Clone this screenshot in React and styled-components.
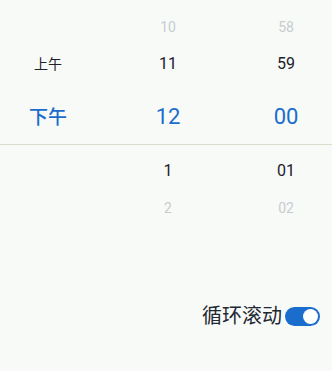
import React, { useState } from 'react';
import styled, { createGlobalStyle } from 'styled-components';

const GlobalStyle = createGlobalStyle`
  * {
    box-sizing: border-box;
  }

  body {
    margin: 0;
    padding: 0;
    background: #f8faf8;
    font-family: Roboto, 'Noto Sans CJK SC', 'Noto Sans', sans-serif;
  }
`;

const colors = {
  blue: '#1a6dcc',
  text: '#1b202b',
  faded: '#c6ccd0',
  divider: '#d9dccb',
};

const Page = styled.div`
  width: 332px;
  height: 371px;
  background: #f8faf8;
  overflow: hidden;
`;

const Picker = styled.div`
  padding-top: 8px;
`;

const Row = styled.div`
  display: grid;
  grid-template-columns: 96px 144px 1fr;
  align-items: center;
  height: ${(p) => p.$height}px;
  margin-top: ${(p) => p.$gap || 0}px;
  border-bottom: ${(p) => (p.$divider ? `1px solid ${colors.divider}` : 'none')};
  box-sizing: content-box;
`;

const sizes = {
  far: { size: 14, color: colors.faded },
  near: { size: 16, color: colors.text },
  active: { size: 22, color: colors.blue },
};

const Cell = styled.div`
  text-align: center;
  font-size: ${(p) => sizes[p.$tone].size}px;
  color: ${(p) => sizes[p.$tone].color};
  line-height: 1;
`;

const PeriodCell = styled(Cell)`
  font-size: ${(p) => (p.$tone === 'active' ? 19 : 14)}px;
  font-weight: ${(p) => (p.$tone === 'active' ? 500 : 400)};
`;

const Footer = styled.div`
  display: flex;
  justify-content: flex-end;
  align-items: center;
  gap: 3px;
  margin-top: 87px;
  padding-right: 12px;
`;

const Label = styled.span`
  font-size: 20px;
  color: #222732;
  line-height: 20px;
`;

const Switch = styled.button`
  display: flex;
  align-items: center;
  justify-content: ${(p) => (p.$on ? 'flex-end' : 'flex-start')};
  width: 35px;
  height: 19px;
  padding: 0 2px;
  border: none;
  border-radius: 10px;
  background: ${(p) => (p.$on ? colors.blue : '#c6ccd0')};
  cursor: pointer;
`;

const Knob = styled.span`
  width: 15px;
  height: 15px;
  border-radius: 50%;
  background: #fff;
`;

const rows = [
  { period: '', hour: '10', minute: '58', tone: 'far', height: 37 },
  { period: '上午', hour: '11', minute: '59', tone: 'near', height: 37 },
  { period: '下午', hour: '12', minute: '00', tone: 'active', height: 54, gap: 8, divider: true },
  { period: '', hour: '1', minute: '01', tone: 'near', height: 52 },
  { period: '', hour: '2', minute: '02', tone: 'far', height: 22 },
];

export default function App() {
  const [loop, setLoop] = useState(true);

  return (
    <Page>
      <GlobalStyle />
      <Picker>
        {rows.map((r) => (
          <Row key={r.hour} $height={r.height} $gap={r.gap} $divider={r.divider}>
            <PeriodCell $tone={r.tone}>{r.period}</PeriodCell>
            <Cell $tone={r.tone}>{r.hour}</Cell>
            <Cell $tone={r.tone}>{r.minute}</Cell>
          </Row>
        ))}
      </Picker>
      <Footer>
        <Label>循环滚动</Label>
        <Switch $on={loop} onClick={() => setLoop(!loop)}>
          <Knob />
        </Switch>
      </Footer>
    </Page>
  );
}
